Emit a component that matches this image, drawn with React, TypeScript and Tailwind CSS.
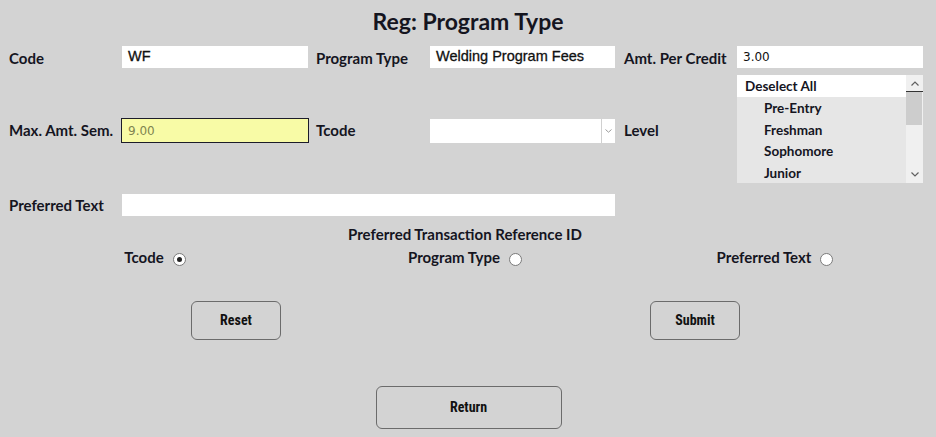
import React from "react";

const label = "font-['Lato','Noto_Sans',sans-serif] font-bold text-[15px] text-[#15151f]";
const inputText = "font-['Liberation_Sans','Arial',sans-serif] text-[14.5px] text-[#111] [-webkit-text-stroke:0.3px_#111]";
const btn =
  "border border-[#6b6b6b] rounded-[6px] bg-transparent font-['Liberation_Sans_Narrow','Roboto_Condensed','Roboto',sans-serif] font-bold text-[14px] text-[#111] flex items-center justify-center";

const Radio = ({ checked }: { checked?: boolean }) => (
  <span className="ml-[9px] mt-[5px] w-[13px] h-[13px] rounded-full bg-white border border-[#7a7a7a] flex items-center justify-center">
    {checked && <span className="w-[5px] h-[5px] rounded-full bg-[#222]" />}
  </span>
);

const levels = ["Pre-Entry", "Freshman", "Sophomore", "Junior"];

const App: React.FC = () => {
  return (
    <div className="min-h-screen w-full bg-[#d3d3d3] pt-[8px]">
      <h1 className="text-center font-['Lato','Noto_Sans',sans-serif] font-bold text-[23px] leading-[26px] text-[#15151f]">
        Reg: Program Type
      </h1>

      <div className="mt-[12px] pl-[9px] grid grid-cols-[113px_194px_114px_194px_113px_186px]">
        {/* row 1 */}
        <div className={`${label} flex items-center h-[23px] pt-[1px]`}>Code</div>
        <div className={`${inputText} bg-white w-[186px] h-[22px] flex items-center px-[6px]`}>WF</div>
        <div className={`${label} flex items-center h-[23px] pt-[1px]`}>Program Type</div>
        <div className={`${inputText} bg-white w-[185px] h-[22px] flex items-center px-[6px]`}>Welding Program Fees</div>
        <div className={`${label} flex items-center h-[23px] pt-[1px]`}>Amt. Per Credit</div>
        <div className="bg-white w-[186px] h-[22px] flex items-center px-[6px] font-['DejaVu_Sans',sans-serif] text-[12px] text-[#111]">
          3.00
        </div>

        {/* row 2 */}
        <div className={`${label} flex items-center mt-[6px] h-[108px] pt-[3px]`}>Max. Amt. Sem.</div>
        <div className="flex items-center mt-[6px] h-[108px] pt-[3px]">
          <div className="w-[188px] h-[25px] -ml-px bg-[#f8fba6] border border-[#1c1c2a] flex items-center px-[6px] font-['DejaVu_Sans',sans-serif] text-[12px] text-[#7f8450]">
            9.00
          </div>
        </div>
        <div className={`${label} flex items-center mt-[6px] h-[108px] pt-[3px]`}>Tcode</div>
        <div className="flex items-center mt-[6px] h-[108px] pt-[3px]">
          <div className="w-[185px] h-[24px] bg-white flex justify-end">
            <div className="w-[14px] h-full border-l border-[#d0d0d0] flex items-center justify-center">
              <svg width="7" height="4" viewBox="0 0 7 4">
                <path d="M0.5 0.5 L3.5 3.2 L6.5 0.5" fill="none" stroke="#9a9a9a" strokeWidth="1" />
              </svg>
            </div>
          </div>
        </div>
        <div className={`${label} flex items-center mt-[6px] h-[108px] pt-[3px]`}>Level</div>
        <div className="mt-[6px] h-[108px] w-[186px] flex">
          <div className="flex-1 bg-[#e6e6e6] flex flex-col font-['Lato','Noto_Sans',sans-serif] font-bold text-[13.5px] text-[#15151f]">
            <div className="bg-white h-[22px] flex items-center pl-[8px] pt-[1px]">Deselect All</div>
            {levels.map((l) => (
              <div key={l} className="h-[21.5px] flex items-center pl-[27px] pt-[1px]">
                {l}
              </div>
            ))}
          </div>
          <div className="w-[17px] bg-[#f0f0f0] flex flex-col">
            <div className="h-[17px] flex items-center justify-center border-b border-[#333]">
              <svg width="8" height="5" viewBox="0 0 8 5">
                <path d="M0.5 4.5 L4 1 L7.5 4.5" fill="none" stroke="#606060" strokeWidth="1.2" />
              </svg>
            </div>
            <div className="h-[33px] bg-[#cdcdcd] mr-[1px]" />
            <div className="flex-1" />
            <div className="h-[17px] flex items-center justify-center">
              <svg width="8" height="5" viewBox="0 0 8 5">
                <path d="M0.5 0.5 L4 4 L7.5 0.5" fill="none" stroke="#606060" strokeWidth="1.2" />
              </svg>
            </div>
          </div>
        </div>

        {/* row 3 */}
        <div className={`${label} flex items-center mt-[11px] h-[22px]`}>Preferred Text</div>
        <div className="col-span-3 mt-[11px] h-[22px] w-[493px] bg-white" />
      </div>

      <div className={`${label} text-center mt-[9px] leading-[18px] pr-[6px]`}>
        Preferred Transaction Reference ID
      </div>

      <div className="mt-[3px] grid grid-cols-3 justify-items-center w-[930px]">
        <div className={`${label} flex items-center`}>
          <span>Tcode</span>
          <Radio checked />
        </div>
        <div className={`${label} flex items-center`}>
          <span>Program Type</span>
          <Radio />
        </div>
        <div className={`${label} flex items-center`}>
          <span>Preferred Text</span>
          <Radio />
        </div>
      </div>

      <div className="mt-[32px] flex pl-[191px] gap-[369px]">
        <button className={`${btn} w-[90px] h-[39px]`}>Reset</button>
        <button className={`${btn} w-[90px] h-[39px]`}>Submit</button>
      </div>

      <div className="mt-[46px] flex justify-center pl-[1px]">
        <button className={`${btn} w-[186px] h-[43px]`}>Return</button>
      </div>
    </div>
  );
};

export default App;
